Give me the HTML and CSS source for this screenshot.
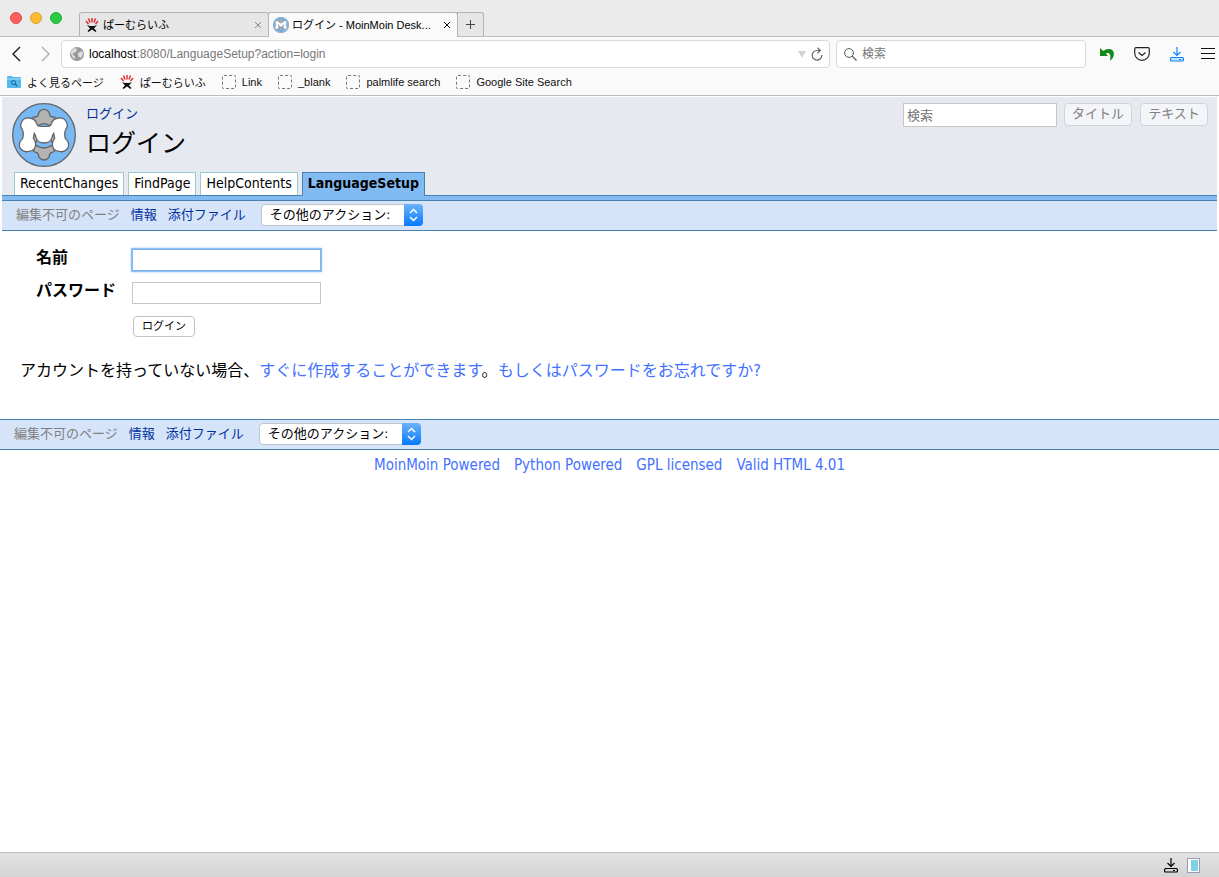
FILE: index.html
```html
<!DOCTYPE html>
<html lang="ja">
  <head>
    <meta charset="UTF-8" />
    <meta name="viewport" content="width=device-width, initial-scale=1.0" />
    <title>ログイン - MoinMoin DesktopEdition</title>
    <link rel="stylesheet" href="styles.css">
  </head>
  <body>
    <!-- shared icons -->
    <svg class="defs" aria-hidden="true">
      <symbol id="moin" viewBox="11 16 192 192">
        <circle cx="107" cy="112" r="94" fill="#78b8f4" stroke="#666" stroke-width="4" />
        <g fill="#b3b3b3" stroke="#666" stroke-width="4">
          <path d="M90 52a17 17 0 0 1 34 0q2 6 8 6a13 13 0 0 1 2 26H124q-17-12-34 0H80a13 13 0 0 1 2-26q6 0 8-6Z" />
          <path d="M90 170a17 17 0 0 0 34 0q2-6 8-6a11 11 0 0 0 4-20L130 144q-23 14-46 0l-6 0a11 11 0 0 0 4 20q6 0 8 6Z" />
          <path d="M74 106l12 8q4 14-6 22l-6-2zM140 106l-12 8q-4 14 6 22l6-2z" />
        </g>
        <path fill="#fff" stroke="#666" stroke-width="4" d="M42 96A22 22 0 0 1 63 61Q80 62 85 78q3 9 14 8h16q11 1 14-8Q134 62 151 61A22 22 0 0 1 172 96Q166 110 172 124A21 21 0 0 1 153 161Q132 160 132 139Q132 130 139 122L136 107Q132 112 131 120Q126 136 107 136Q88 136 83 120Q82 112 78 107L75 122Q82 130 82 139Q82 160 61 161A21 21 0 0 1 42 124Q48 110 42 96Z" />
      </symbol>
      <symbol id="palm" viewBox="0 0 14 14">
        <path d="M1 3l2.500 3M3.500 .5L5 4.500M7 0v4.500M10.500 .5L9 4.500M13 3l-2.500 3" fill="none" stroke="#e02525" stroke-width="1.400" />
        <path d="M2 7l3 1h4l3-1-3 3.500 2.500 2.500-1 1L7 11.500 3.500 14l-1-1L5 10.500z" fill="#111" />
      </symbol>
      <symbol id="updown" viewBox="0 0 19 22">
        <path d="M6 9l3.500-3.500L13 9M6 13l3.500 3.500L13 13" fill="none" stroke="#fff" stroke-width="1.500" />
      </symbol>
      <symbol id="save" viewBox="0 0 14 16">
        <path d="M7 1v8M3.500 6L7 9.500 10.500 6" fill="none" stroke="currentColor" stroke-width="1.200" />
        <rect x=".6" y="11.500" width="12.800" height="3.500" rx="1" stroke="currentColor" stroke-width="1.200" />
        <path d="M9 13.500h2" stroke="currentColor" />
      </symbol>
    </svg>

    <div class="tabbar">
      <span class="light red"></span>
      <span class="light yellow"></span>
      <span class="light green"></span>
      <div class="tabs">
        <div class="tab">
          <svg class="icon14"><use href="#palm" /></svg>
          <span class="tab-title">ぱーむらいふ</span>
          <button class="close" aria-label="タブを閉じる"><svg width="8" height="8" viewBox="0 0 8 8"><path d="M1 1l6 6M7 1L1 7" stroke="currentColor" /></svg></button>
        </div>
        <div class="tab active">
          <svg class="icon16"><use href="#moin" /></svg>
          <span class="tab-title">ログイン - MoinMoin Desk...</span>
          <button class="close" aria-label="タブを閉じる"><svg width="8" height="8" viewBox="0 0 8 8"><path d="M1 1l6 6M7 1L1 7" stroke="currentColor" /></svg></button>
        </div>
        <button class="newtab" aria-label="新しいタブ"><svg width="9" height="9" viewBox="0 0 9 9"><path d="M4.500 0v9M0 4.500h9" stroke="#444" /></svg></button>
      </div>
    </div>

    <div class="navbar">
      <button class="tool back" aria-label="戻る"><svg width="9" height="16" viewBox="0 0 9 16"><path d="M8 1L1 8l7 7" fill="none" stroke="#222" stroke-width="1.500" /></svg></button>
      <button class="tool forward" aria-label="進む"><svg width="9" height="16" viewBox="0 0 9 16"><path d="M1 1l7 7-7 7" fill="none" stroke="#aaa" stroke-width="1.300" /></svg></button>
      <div class="urlbar">
        <svg width="14" height="14" viewBox="0 0 14 14"><circle cx="7" cy="7" r="7" fill="#999" /><path d="M1 4l3-3 3 1-1 3-3 1v2l2 1v3l-2-1-2-4zM8 6l4-2 1 3-2 4-2-1-1-2z" fill="#ddd" /></svg>
        <a class="url" href="#"><b>localhost</b>:8080/LanguageSetup?action=login</a>
        <svg width="8" height="7" viewBox="0 0 8 7"><path d="M0 0h8L4 7z" fill="#d3d3d3" /></svg>
        <button class="tool" aria-label="再読み込み"><svg width="12" height="14" viewBox="0 0 12 14"><path d="M10.800 8A4.800 4.800 0 1 1 6 3.500h3M6.500 .8l2.800 2.700-2.800 2.700" fill="none" stroke="#666" stroke-width="1.200" /></svg></button>
      </div>
      <div class="searchbar">
        <svg width="13" height="13" viewBox="0 0 13 13"><circle cx="5" cy="5" r="4.400" fill="none" stroke="#555" /><path d="M8.200 8.200l4.300 4.300" stroke="#555" stroke-width="1.200" /></svg>
        <input type="search" aria-label="ウェブ検索" placeholder="検索">
      </div>
      <div class="actions">
        <button class="tool" aria-label="閉じたタブを元に戻す"><svg width="16" height="16" viewBox="0 0 16 16"><path d="M1 2v8h8L6.800 7.600C10 6 12.500 8 10.800 14.800 16.500 11 16 3.500 10.500 3 8 2.800 6 3.500 4.200 5z" fill="#118a18" /></svg></button>
        <button class="tool" aria-label="Pocket"><svg width="16" height="14" viewBox="0 0 16 14"><path d="M2 .7h12q1.300 0 1.300 1.300v4a7.300 7.300 0 0 1-14.600 0V2Q.7.700 2 .7zM4.500 5.500L8 8.500l3.500-3" fill="none" stroke="#222" stroke-width="1.200" /></svg></button>
        <button class="tool download" aria-label="ダウンロード"><svg width="14" height="16"><use href="#save" /></svg></button>
        <button class="tool menu" aria-label="メニュー"><svg width="14" height="12" viewBox="0 0 14 12"><path d="M0 .5h14M0 5.500h14M0 10.500h14" stroke="#111" /></svg></button>
      </div>
    </div>

    <nav class="bookmarks">
      <a href="#"><svg width="14" height="14" viewBox="0 0 14 14"><path d="M0 2q0-1 1-1h4l1 1h7q1 0 1 1v9q0 1-1 1H1q-1 0-1-1z" fill="#55b8ec" /><path d="M0 4h14" stroke="#a7dcf7" /><circle cx="6.500" cy="7.500" r="2" fill="none" stroke="#17649b" /><path d="M8 9l2 2" stroke="#17649b" stroke-width="1.300" /></svg>よく見るページ</a>
      <a href="#"><svg class="icon14"><use href="#palm" /></svg>ぱーむらいふ</a>
      <a href="#"><span class="blank"></span>Link</a>
      <a href="#"><span class="blank"></span>_blank</a>
      <a href="#"><span class="blank"></span>palmlife search</a>
      <a href="#"><span class="blank"></span>Google Site Search</a>
    </nav>

    <div class="page">
      <header class="header">
        <div class="masthead">
          <svg class="logo"><use href="#moin" /></svg>
          <div class="titles">
            <a class="location" href="#">ログイン</a>
            <h1>ログイン</h1>
          </div>
          <form class="wikisearch">
            <input type="text" aria-label="検索" placeholder="検索">
            <button type="button" disabled>タイトル</button>
            <button type="button" disabled>テキスト</button>
          </form>
        </div>
        <nav class="navi">
          <a href="#">RecentChanges</a>
          <a href="#">FindPage</a>
          <a href="#">HelpContents</a>
          <a class="current" href="#">LanguageSetup</a>
        </nav>
        <div class="pageline"></div>
        <div class="editbar">
          <span class="disabled">編集不可のページ</span>
          <a href="#">情報</a>
          <a href="#">添付ファイル</a>
          <span class="select">
            <select aria-label="その他のアクション"><option>その他のアクション:</option></select>
            <svg class="arrows"><use href="#updown" /></svg>
          </span>
        </div>
      </header>

      <main class="content">
        <form class="login">
          <label for="name">名前</label>
          <input id="name" class="focused" type="text">
          <label for="password">パスワード</label>
          <input id="password" type="password">
          <button type="button">ログイン</button>
        </form>
        <p>アカウントを持っていない場合、<a href="#">すぐに作成することができます</a>。<a href="#">もしくはパスワードをお忘れですか?</a></p>
      </main>

      <footer>
        <div class="editbar bottom">
          <span class="disabled">編集不可のページ</span>
          <a href="#">情報</a>
          <a href="#">添付ファイル</a>
          <span class="select">
            <select aria-label="その他のアクション"><option>その他のアクション:</option></select>
            <svg class="arrows"><use href="#updown" /></svg>
          </span>
        </div>
        <div class="credits">
          <a href="#">MoinMoin Powered</a>
          <a href="#">Python Powered</a>
          <a href="#">GPL licensed</a>
          <a href="#">Valid HTML 4.01</a>
        </div>
      </footer>
    </div>

    <div class="statusbar">
      <svg width="14" height="16"><use href="#save" /></svg>
      <svg width="13" height="15" viewBox="0 0 13 15"><rect x=".5" y=".5" width="12" height="14" fill="#fff" stroke="#9a9ab8" /><path d="M4 2h7v11H4z" fill="#7fd0e6" /></svg>
    </div>
  </body>
</html>
```

FILE: styles.css
```css
* {
  box-sizing: border-box;
}
body {
  margin: 0;
  min-height: 100vh;
  display: flex;
  flex-direction: column;
  background: #fff;
  color: #000;
  font-family: "DejaVu Sans Condensed", "Noto Sans CJK JP", sans-serif;
}
a {
  text-decoration: none;
}
button,
input,
select {
  font-family: inherit;
  margin: 0;
}
button {
  padding: 0;
}
svg {
  display: block;
  flex: none;
}
.defs {
  position: absolute;
  width: 0;
  height: 0;
}
.icon14 {
  width: 14px;
  height: 14px;
}
.icon16 {
  width: 16px;
  height: 16px;
}

/* Browser chrome */
.tabbar,
.navbar,
.bookmarks {
  font-family: "Liberation Sans", "Noto Sans CJK JP", sans-serif;
  font-size: 11px;
}
.tabbar {
  display: flex;
  align-items: flex-start;
  gap: 8px;
  height: 37px;
  padding: 12px 10px 0;
  background: #ebebeb;
  border-bottom: 1px solid #bcbcbc;
}
.light {
  width: 12px;
  height: 12px;
  border-radius: 50%;
}
.red {
  background: #fc605c;
  border: 1px solid #e04b47;
}
.yellow {
  background: #fdbc31;
  border: 1px solid #dea132;
}
.green {
  background: #29cb42;
  border: 1px solid #24ac36;
}
.tabs {
  display: flex;
  margin-left: 9px;
}
.tab {
  display: flex;
  align-items: center;
  gap: 4px;
  width: 190px;
  height: 24px;
  padding: 0 6px 0 5px;
  border: 1px solid #b4b4b4;
  border-bottom: 0;
  border-radius: 3px 3px 0 0;
  background: #e6e6e6;
}
.tab.active {
  height: 25px;
  padding: 0 6px 0 4px;
  margin-left: -1px;
  gap: 3px;
  background: #fafafa;
}
.tab-title {
  flex: 1;
  line-height: 20px;
  white-space: nowrap;
}
.close,
.tool {
  border: 0;
  background: none;
}
.close {
  color: #888;
}
.active .close {
  color: #111;
}
.newtab {
  display: flex;
  align-items: center;
  justify-content: center;
  width: 27px;
  height: 24px;
  margin-left: -1px;
  border: 1px solid #b4b4b4;
  border-bottom: 0;
  border-radius: 0 3px 0 0;
  background: #e6e6e6;
}
.navbar {
  display: flex;
  align-items: center;
  padding: 3px 4px 2px 12px;
  background: #fafafa;
}
.forward {
  margin: 0 11px 0 20px;
}
.urlbar,
.searchbar {
  display: flex;
  align-items: center;
  height: 28px;
  background: #fff;
  border: 1px solid #d9d9d9;
  border-radius: 4px;
  font-size: 12px;
}
.urlbar {
  flex: 1;
  gap: 5px;
  padding: 0 6px 0 8px;
}
.url {
  flex: 1;
  color: #777;
}
.url b {
  font-weight: normal;
  color: #000;
}
.searchbar {
  width: 250px;
  margin: 0 10px 0 6px;
  gap: 5px;
  padding: 0 7px;
}
.searchbar input {
  flex: 1;
  min-width: 0;
  padding: 0;
  border: 0;
  outline: 0;
  background: none;
  font-size: 12px;
}
::placeholder {
  color: #757575;
  opacity: 1;
}
.actions {
  display: flex;
  align-items: center;
  gap: 13px;
}
.actions .tool {
  width: 22px;
  display: flex;
  justify-content: center;
}
.actions .menu {
  width: 14px;
}
.download {
  color: #0a84ff;
}
.download svg {
  fill: #c8e6ff;
}
.bookmarks {
  display: flex;
  align-items: center;
  gap: 16px;
  height: 26px;
  padding: 0 7px 2px;
  background: #fafafa;
  border-bottom: 1px solid #bcbcbc;
}
.bookmarks a {
  display: flex;
  align-items: center;
  gap: 6px;
  color: #111;
}
.blank {
  width: 14px;
  height: 14px;
  border: 1px dashed #777;
  border-radius: 2px;
}

/* Wiki page */
.page {
  flex: 1;
}
.header {
  margin: 1px 2px 0;
  background: #e6e9f0;
}
.masthead {
  display: flex;
  align-items: flex-start;
  padding: 6px 9px 0 10px;
}
.logo {
  width: 64px;
  height: 64px;
}
.titles {
  flex: 1;
  margin-left: 10px;
}
.location {
  display: block;
  font-size: 13px;
  line-height: 22px;
  color: #0030a0;
}
h1 {
  margin: 0;
  font-size: 25px;
  font-weight: normal;
  line-height: 38px;
}
.wikisearch {
  display: flex;
  align-items: flex-start;
  gap: 8px;
}
.wikisearch input {
  width: 154px;
  height: 24px;
  padding: 0 3px;
  border: 1px solid #c6c6c6;
  background: #fff;
  font-size: 13px;
  margin-right: -1px;
}
.wikisearch button {
  width: 68px;
  height: 23px;
  border: 1px solid #d0d3d8;
  border-radius: 4px;
  background: #f3f5f9;
  color: #808080;
  font-size: 13px;
  line-height: 16px;
  padding-bottom: 2px;
}
.navi {
  display: flex;
  gap: 4px;
  padding: 5px 12px 0;
}
.navi a {
  height: 23px;
  padding: 0 5px;
  border: 1px solid #9cc;
  border-bottom: 0;
  background: #fff;
  color: #000;
  font-size: 14px;
  line-height: 21px;
}
.navi .current {
  position: relative;
  height: 24px;
  margin-bottom: -1px;
  border-color: #4682b4;
  background: #81bbf2;
  font-weight: bold;
}
.pageline {
  height: 6px;
  border-top: 1px solid #4682b4;
  border-bottom: 1px solid #4682b4;
  background: #81bbf2;
}
.editbar {
  display: flex;
  align-items: center;
  gap: 11px;
  height: 30px;
  padding: 0 14px 2px;
  border-bottom: 1px solid #4682b4;
  background: #d6e4f9;
  font-size: 13px;
}
.editbar a,
.disabled {
  padding-bottom: 3px;
}
.editbar a {
  color: #0030a0;
}
.disabled {
  color: #808080;
}
.select {
  position: relative;
  margin-left: 4px;
}
.select select {
  display: block;
  width: 162px;
  height: 22px;
  padding: 0 24px 0 8px;
  appearance: none;
  border: 1px solid #c0c4cc;
  border-radius: 4px;
  background: #fff;
  color: #000;
  font-size: 13px;
}
.arrows {
  position: absolute;
  top: 0;
  right: 0;
  width: 19px;
  height: 22px;
  border-radius: 0 4px 4px 0;
  background: linear-gradient(#6cb3fa, #067aff);
  pointer-events: none;
}
.content {
  padding: 16px 20px 35px;
  font-size: 16px;
}
.login {
  display: grid;
  grid-template-columns: 96px 189px;
  row-gap: 9px;
  padding-left: 16px;
}
.login label {
  font-weight: bold;
  line-height: 22px;
}
.login input {
  height: 22px;
  margin-top: 2px;
  padding: 0 4px;
  border: 1px solid #c6c6c6;
  background: #fff;
  font-size: 13px;
}
.login .focused {
  border-color: #7fb4ec;
  box-shadow: 0 0 0 1px #8fc0f2, 0 0 2px 1px #a9cff5;
}
.login button {
  grid-column: 2;
  justify-self: start;
  width: 62px;
  height: 21px;
  margin: 3px 0 0 1px;
  border: 1px solid #c4c4c4;
  border-radius: 4px;
  background: #fff;
  color: #000;
  font-size: 11px;
  line-height: 18px;
}
.content p {
  margin: 21px 0 0;
  line-height: 26px;
}
.content a,
.credits a {
  color: #4371ff;
}
.bottom {
  height: 31px;
  border-top: 1px solid #4682b4;
}
.credits {
  display: flex;
  justify-content: center;
  gap: 14px;
  font-size: 15px;
  line-height: 30px;
}

.statusbar {
  display: flex;
  align-items: center;
  justify-content: flex-end;
  gap: 9px;
  height: 25px;
  padding-right: 19px;
  border-top: 1px solid #bcbcbc;
  background: linear-gradient(#e2e2e2, #d4d4d4);
}
.statusbar svg {
  fill: none;
}
```
